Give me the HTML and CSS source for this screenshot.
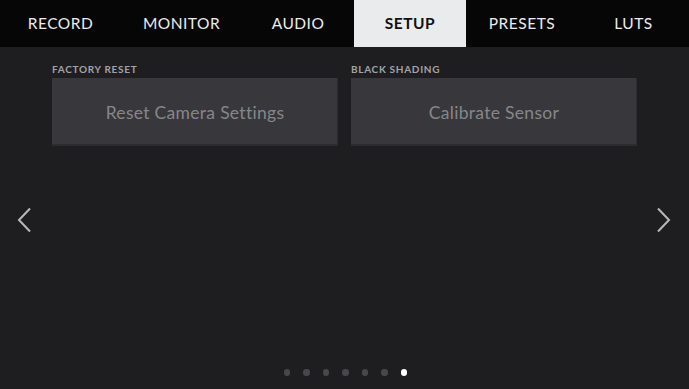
FILE: index.html
```html
<!DOCTYPE html>
<html>
<head>
<meta charset="utf-8">
<link rel="stylesheet" href="styles.css">
</head>
<body>
<div class="screen">
  <nav class="tabs">
    <div class="tab">RECORD</div>
    <div class="tab">MONITOR</div>
    <div class="tab">AUDIO</div>
    <div class="tab active">SETUP</div>
    <div class="tab">PRESETS</div>
    <div class="tab">LUTS</div>
  </nav>
  <main class="content">
    <div class="arrow left">
      <svg width="16" height="26" viewBox="0 0 16 26"><polyline points="13,1.5 2,13 13,24.5" fill="none" stroke="#b9b9bc" stroke-width="2"/></svg>
    </div>
    <div class="panel">
      <div class="group">
        <div class="label">FACTORY RESET</div>
        <div class="button">Reset Camera Settings</div>
      </div>
      <div class="group">
        <div class="label">BLACK SHADING</div>
        <div class="button">Calibrate Sensor</div>
      </div>
    </div>
    <div class="arrow right">
      <svg width="16" height="26" viewBox="0 0 16 26"><polyline points="3,1.5 14,13 3,24.5" fill="none" stroke="#b9b9bc" stroke-width="2"/></svg>
    </div>
  </main>
  <div class="dots">
    <span class="dot"></span><span class="dot"></span><span class="dot"></span><span class="dot"></span><span class="dot"></span><span class="dot"></span><span class="dot on"></span>
  </div>
</div>
</body>
</html>
```
FILE: styles.css
```css
html, body {
  margin: 0;
  padding: 0;
  background: #1e1e21;
}
.screen {
  width: 689px;
  height: 389px;
  display: flex;
  flex-direction: column;
  font-family: Lato, "Open Sans", sans-serif;
  background: #1e1e21;
  overflow: hidden;
}
.tabs {
  height: 47px;
  background: #060606;
  display: grid;
  grid-template-columns: 121px 121px 112px 112px 112px 111px;
  flex: none;
}
.tab {
  display: flex;
  align-items: center;
  justify-content: center;
  color: #ececec;
  font-size: 15.5px;
  letter-spacing: 0.5px;
  padding-bottom: 1px;
}
.tab.active {
  background: #e9ebed;
  color: #111;
  font-weight: bold;
}
.content {
  flex: 1;
  display: flex;
  align-items: flex-start;
  position: relative;
}
.arrow {
  width: 52px;
  height: 100%;
  display: flex;
  align-items: center;
  justify-content: center;
  padding-top: 4px;
  box-sizing: border-box;
}
.arrow.left { justify-content: flex-start; padding-left: 17px; }
.arrow.right { justify-content: flex-end; padding-right: 18px; }
.panel {
  flex: 1;
  display: flex;
  gap: 13px;
  padding-top: 17px;
}
.group {
  width: 286px;
  display: flex;
  flex-direction: column;
}
.label {
  font-size: 10px;
  font-weight: bold;
  color: #a3a3a7;
  letter-spacing: 0.7px;
  height: 14px;
  line-height: 10px;
}
.button {
  height: 68px;
  background: #38383c;
  box-shadow: inset -1px -2px 0 #2c2c30;
  color: #86868a;
  font-size: 17.5px;
  letter-spacing: 0.3px;
  display: flex;
  align-items: center;
  justify-content: center;
}
.dots {
  position: absolute;
  top: 369px;
  left: 0;
  width: 689px;
  display: flex;
  justify-content: center;
  gap: 13px;
  padding-left: 1px;
}
.dot {
  width: 6.5px;
  height: 6.5px;
  border-radius: 50%;
  background: #48484c;
}
.dot.on {
  background: #ffffff;
}
```
